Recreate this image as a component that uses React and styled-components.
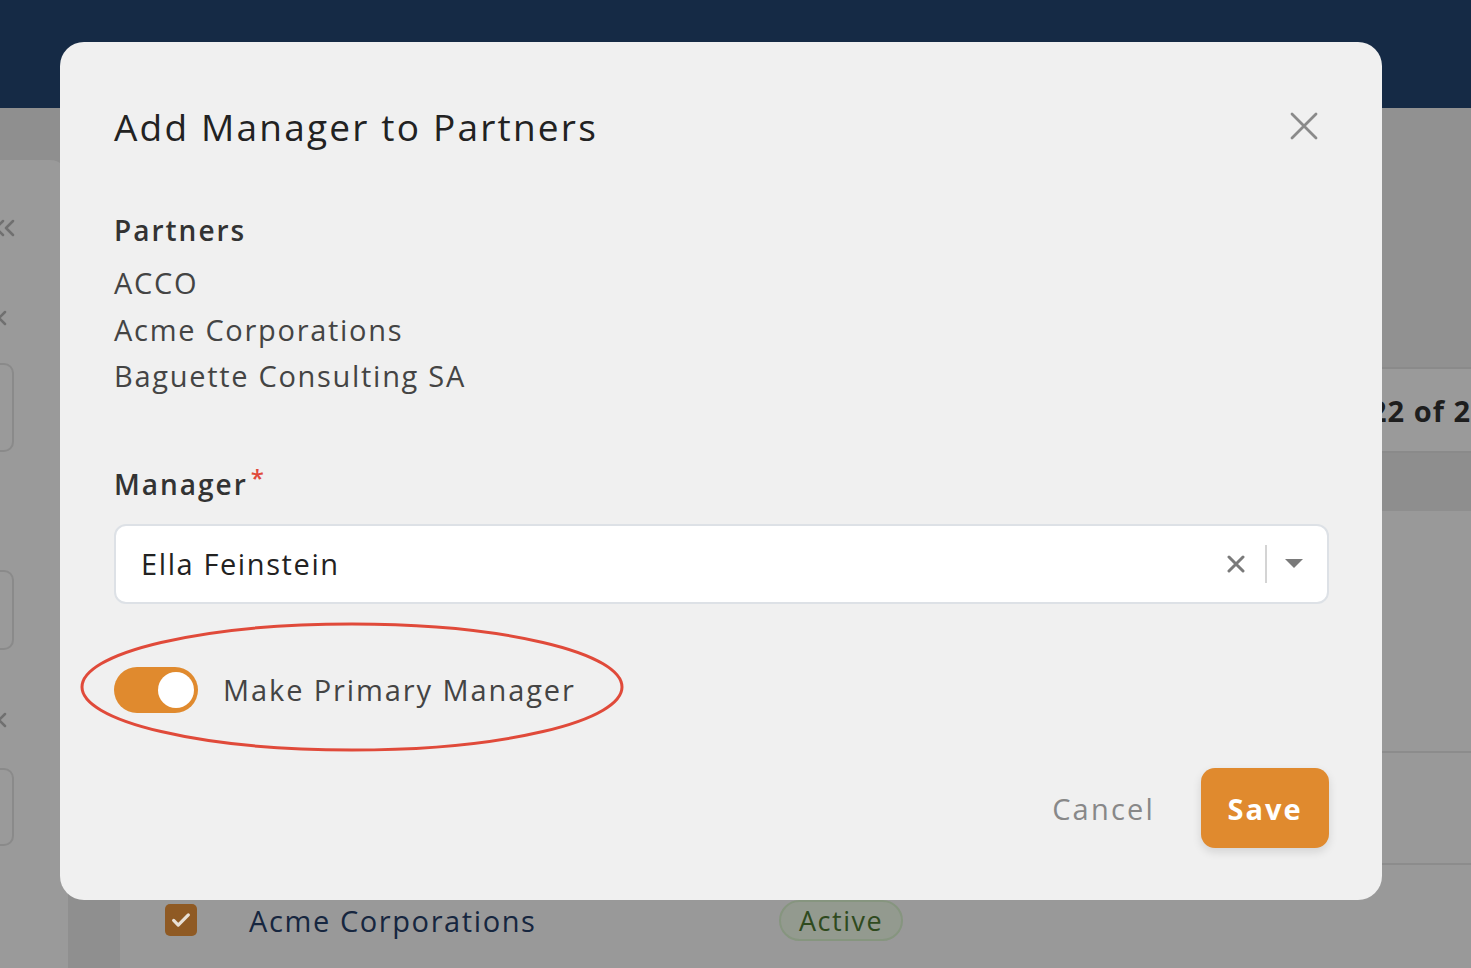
import React from 'react';
import styled, { createGlobalStyle } from 'styled-components';

const GlobalStyle = createGlobalStyle`
  html, body {
    margin: 0;
    padding: 0;
    height: 100%;
    overflow: hidden;
    font-family: "Open Sans", "Noto Sans", sans-serif;
  }
  #root {
    height: 100%;
  }
`;

const Page = styled.div`
  width: 1471px;
  height: 968px;
  display: flex;
  flex-direction: column;
  background: #999999;
  position: relative;
  overflow: hidden;
`;

const Header = styled.div`
  height: 108px;
  flex-shrink: 0;
  background: #152a45;
`;

const Body = styled.div`
  flex: 1;
  display: flex;
  background: #8f8f8f;
`;

const Sidebar = styled.div`
  width: 68px;
  margin-top: 52px;
  background: #9a9a9a;
  border-top-right-radius: 18px;
  display: flex;
  flex-direction: column;
  padding-top: 48px;
`;

const SideIcon = styled.div`
  height: 40px;
  display: flex;
  align-items: center;
  margin-left: ${(p) => p.ml}px;
`;

const Spacer = styled.div`
  height: ${(p) => p.h}px;
  flex-shrink: 0;
`;

const SideCard = styled.div`
  height: ${(p) => p.h}px;
  box-sizing: border-box;
  margin-left: -30px;
  width: 44px;
  border: 2px solid #8a8a8a;
  border-radius: 10px;
  margin-bottom: ${(p) => p.mb}px;
`;

const Gutter = styled.div`
  width: 52px;
  background: #8f8f8f;
`;

const Main = styled.div`
  flex: 1;
  display: flex;
  flex-direction: column;
  background: #999999;
`;

const TopBand = styled.div`
  height: 259px;
  background: #919191;
`;

const PagerBand = styled.div`
  height: 82px;
  background: #9a9a9a;
  border-top: 2px solid #8a8a8a;
  border-bottom: 2px solid #8a8a8a;
  display: flex;
  align-items: center;
  justify-content: flex-end;
  font-size: 29px;
  font-weight: 700;
  letter-spacing: 1px;
  color: #1e1e1e;
  white-space: nowrap;
  overflow: hidden;
`;

const HeadBand = styled.div`
  height: 58px;
  background: #8e8e8e;
`;

const RowBand = styled.div`
  height: ${(p) => p.h}px;
  border-bottom: 2px solid #8c8c8c;
  display: flex;
  align-items: center;
  padding-left: 45px;
  gap: 52px;
`;

const Check = styled.div`
  width: 32px;
  height: 32px;
  border-radius: 5px;
  background: #8f5a24;
  display: flex;
  align-items: center;
  justify-content: center;
`;

const RowName = styled.div`
  width: 478px;
  font-size: 29px;
  letter-spacing: 1.6px;
  color: #16263f;
`;

const StatusPill = styled.div`
  padding: 0 18px;
  border-radius: 24px;
  border: 2px solid #86957f;
  background: #939a8f;
  color: #2f4a1e;
  font-size: 27px;
  letter-spacing: 1.5px;
`;

const Modal = styled.div`
  position: absolute;
  left: 60px;
  top: 42px;
  width: 1322px;
  height: 858px;
  box-sizing: border-box;
  background: #f0f0f0;
  border-radius: 24px;
  padding: 56px 53px 52px 54px;
  display: flex;
  flex-direction: column;
  color: #222;
`;

const TitleRow = styled.div`
  display: flex;
  align-items: center;
  justify-content: space-between;
  height: 56px;
`;

const Title = styled.h2`
  margin: 0;
  font-size: 37px;
  font-weight: 500;
  letter-spacing: 2.2px;
  color: #222;
`;

const CloseButton = styled.button`
  border: none;
  background: none;
  padding: 0;
  width: 30px;
  height: 30px;
  margin-right: 10px;
  display: flex;
  align-items: center;
  justify-content: center;
  cursor: pointer;
`;

const Section = styled.div`
  margin-top: ${(p) => p.mt}px;
  display: flex;
  flex-direction: column;
`;

const Label = styled.div`
  font-size: 28px;
  font-weight: 600;
  letter-spacing: 2px;
  color: #333;
  line-height: 40px;
  display: flex;
  align-items: flex-start;
`;

const Required = styled.span`
  color: #e04a3a;
  font-size: 24px;
  line-height: 24px;
  margin-left: 3px;
  margin-top: 2px;
`;

const PartnerList = styled.ul`
  list-style: none;
  margin: 10px 0 0;
  padding: 0;
`;

const PartnerItem = styled.li`
  font-size: 29px;
  line-height: 46.5px;
  letter-spacing: 1.7px;
  color: #444;
`;

const SelectBox = styled.div`
  margin-top: 20px;
  height: 80px;
  box-sizing: border-box;
  background: #fff;
  border: 2px solid #dde1e6;
  border-radius: 12px;
  display: flex;
  align-items: center;
  padding: 0 24px 0 25px;
`;

const SelectValue = styled.div`
  flex: 1;
  font-size: 29px;
  letter-spacing: 1.6px;
  color: #222;
`;

const Divider = styled.div`
  width: 2px;
  height: 38px;
  background: #d4d4d4;
  margin: 0 18px 0 20px;
`;

const ToggleRow = styled.div`
  margin-top: 63px;
  display: flex;
  align-items: center;
  gap: 25px;
  position: relative;
`;

const Toggle = styled.div`
  width: 84px;
  height: 46px;
  border-radius: 23px;
  background: #e08a2e;
  display: flex;
  align-items: center;
  justify-content: flex-end;
  padding: 0 4px;
  box-sizing: border-box;
`;

const Knob = styled.div`
  width: 36px;
  height: 36px;
  border-radius: 50%;
  background: #fff;
`;

const ToggleLabel = styled.div`
  font-size: 29px;
  letter-spacing: 1.9px;
  color: #444;
`;

const Annotation = styled.svg`
  position: absolute;
  left: -36px;
  top: -47px;
  pointer-events: none;
`;

const Footer = styled.div`
  margin-top: auto;
  display: flex;
  justify-content: flex-end;
  align-items: center;
  gap: 46px;
`;

const CancelButton = styled.button`
  border: none;
  background: none;
  font-family: inherit;
  font-size: 29px;
  letter-spacing: 2.2px;
  color: #888;
  padding: 0;
  cursor: pointer;
`;

const SaveButton = styled.button`
  width: 128px;
  height: 80px;
  border: none;
  border-radius: 14px;
  background: #e08a2e;
  color: #fff;
  font-family: inherit;
  font-size: 29px;
  font-weight: 700;
  letter-spacing: 2px;
  box-shadow: 0 4px 10px rgba(0, 0, 0, 0.12);
  cursor: pointer;
`;

const partners = ['ACCO', 'Acme Corporations', 'Baguette Consulting SA'];

const CloseSmall = () => (
  <svg width="18" height="18" viewBox="0 0 18 18" stroke="#707070" strokeWidth="2.5" strokeLinecap="round">
    <path d="M3 3L15 15M15 3L3 15" />
  </svg>
);

export default function App() {
  return (
    <>
      <GlobalStyle />
      <Page>
        <Header />
        <Body>
          <Sidebar>
            <SideIcon ml={-8}>
              <svg width="24" height="22" viewBox="0 0 24 22" fill="none" stroke="#707070" strokeWidth="2.5" strokeLinecap="round" strokeLinejoin="round">
                <path d="M11 4L4 11l7 7M21 4l-7 7 7 7" />
              </svg>
            </SideIcon>
            <Spacer h={50} />
            <SideIcon ml={-10}>
              <CloseSmall />
            </SideIcon>
            <Spacer h={25} />
            <SideCard h={89} mb={118} />
            <SideCard h={80} mb={50} />
            <SideIcon ml={-10}>
              <CloseSmall />
            </SideIcon>
            <Spacer h={28} />
            <SideCard h={78} mb={0} />
          </Sidebar>
          <Gutter />
          <Main>
            <TopBand />
            <PagerBand>22 of 2</PagerBand>
            <HeadBand />
            <RowBand h={240} />
            <RowBand h={110} />
            <RowBand h={110}>
              <Check>
                <svg width="22" height="22" viewBox="0 0 24 24" fill="none" stroke="#e8e0d6" strokeWidth="3.5" strokeLinecap="round" strokeLinejoin="round">
                  <path d="M4 12.5l5 5L20 6.5" />
                </svg>
              </Check>
              <RowName>Acme Corporations</RowName>
              <StatusPill>Active</StatusPill>
            </RowBand>
          </Main>
        </Body>

        <Modal>
          <TitleRow>
            <Title>Add Manager to Partners</Title>
            <CloseButton aria-label="Close">
              <svg width="28" height="28" viewBox="0 0 28 28" stroke="#8a8a8a" strokeWidth="2.8" strokeLinecap="round">
                <path d="M2 2L26 26M26 2L2 26" />
              </svg>
            </CloseButton>
          </TitleRow>

          <Section mt={56}>
            <Label>Partners</Label>
            <PartnerList>
              {partners.map((p) => (
                <PartnerItem key={p}>{p}</PartnerItem>
              ))}
            </PartnerList>
          </Section>

          <Section mt={64}>
            <Label>
              Manager<Required>*</Required>
            </Label>
            <SelectBox>
              <SelectValue>Ella Feinstein</SelectValue>
              <svg width="18" height="18" viewBox="0 0 18 18" stroke="#7a7a7a" strokeWidth="3" strokeLinecap="round">
                <path d="M2 2L16 16M16 2L2 16" />
              </svg>
              <Divider />
              <svg width="18" height="10" viewBox="0 0 18 10" fill="#7a7a7a">
                <path d="M0 0H18L9 9Z" />
              </svg>
            </SelectBox>
          </Section>

          <ToggleRow>
            <Annotation width="548" height="134" viewBox="0 0 548 134">
              <ellipse cx="274" cy="67" rx="270" ry="63" fill="none" stroke="#e04a3a" strokeWidth="3" />
            </Annotation>
            <Toggle>
              <Knob />
            </Toggle>
            <ToggleLabel>Make Primary Manager</ToggleLabel>
          </ToggleRow>

          <Footer>
            <CancelButton>Cancel</CancelButton>
            <SaveButton>Save</SaveButton>
          </Footer>
        </Modal>
      </Page>
    </>
  );
}
